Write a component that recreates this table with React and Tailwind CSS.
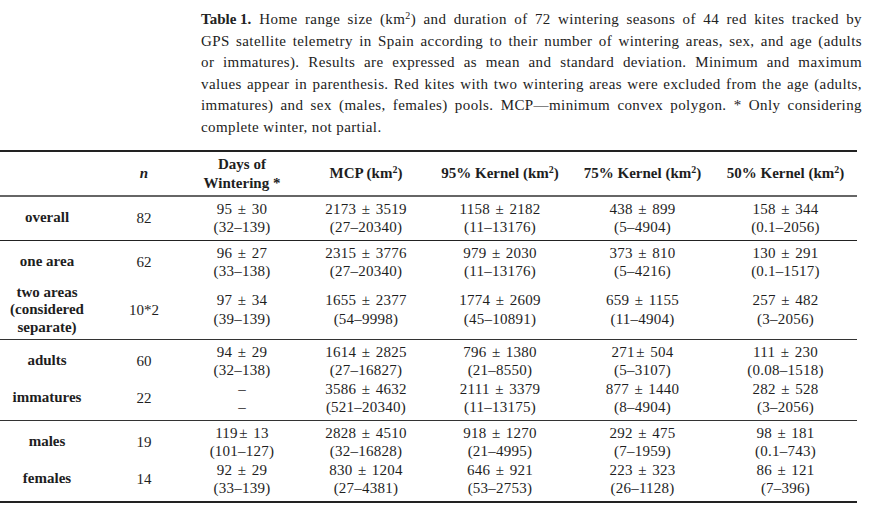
import React from "react";

const cols = "grid grid-cols-[94px_100px_96px_139px_142px_143px_143px]";

function Sup2() {
  return <sup className="text-[10px]">2</sup>;
}

function PM({ s }) {
  const parts = s.split("±");
  if (parts.length < 2) return <>{s}</>;
  return (
    <>
      {parts[0]}
      <span className="px-[1.5px]">±</span>
      {parts[1]}
    </>
  );
}

function Val({ a, b, mcp }) {
  return (
    <div className={`flex flex-col items-center justify-center leading-[18.5px] tracking-[0.25px] ${mcp ? "pl-[13px]" : ""}`}>
      <div className="whitespace-nowrap"><PM s={a} /></div>
      <div className="whitespace-nowrap">{b}</div>
    </div>
  );
}

function Row({ label, n, vals, h }) {
  return (
    <div className={`${cols} ${h} items-center`}>
      <div className="flex flex-col items-center font-bold leading-[17.5px]">
        {label.map((l, i) => (
          <div key={i} className="whitespace-nowrap">{l}</div>
        ))}
      </div>
      <div className="text-center">{n}</div>
      {vals.map((v, i) => (
        <Val key={i} a={v[0]} b={v[1]} mcp={i === 1} />
      ))}
    </div>
  );
}

const capLine = "text-justify [text-align-last:justify] whitespace-nowrap";

export default function App() {
  return (
    <div className="w-[873px] h-[508px] bg-white text-[#1e1e1e] font-['Liberation_Serif',serif] text-[15px] overflow-hidden">
      <div className="ml-[201px] w-[661px] pt-[9px] leading-[21.5px] text-[#222] tracking-[0.4px]">
        <div className="flex">
          <b className="tracking-normal mr-[8px] whitespace-nowrap">Table 1.</b>
          <div className={`${capLine} flex-1`}>
            Home range size (km<Sup2 />) and duration of 72 wintering seasons of 44 red kites tracked by
          </div>
        </div>
        <div className={capLine}>
          GPS satellite telemetry in Spain according to their number of wintering areas, sex, and age (adults
        </div>
        <div className={capLine}>
          or immatures). Results are expressed as mean and standard deviation. Minimum and maximum
        </div>
        <div className={capLine}>
          values appear in parenthesis. Red kites with two wintering areas were excluded from the age (adults,
        </div>
        <div className={capLine}>
          immatures) and sex (males, females) pools. MCP—minimum convex polygon. * Only considering
        </div>
        <div>complete winter, not partial.</div>
      </div>

      <div className="mt-[12px] w-[857px]">
        <div className="h-[2px] bg-[#222]" />
        <div className={`${cols} h-[43px] items-center font-bold leading-[19px]`}>
          <div />
          <div className="text-center italic">n</div>
          <div className="flex flex-col items-center">
            <div className="whitespace-nowrap">Days of</div>
            <div className="whitespace-nowrap">Wintering *</div>
          </div>
          <div className="text-center pl-[13px] whitespace-nowrap">MCP (km<Sup2 />)</div>
          <div className="text-center whitespace-nowrap">95% Kernel (km<Sup2 />)</div>
          <div className="text-center whitespace-nowrap">75% Kernel (km<Sup2 />)</div>
          <div className="text-center whitespace-nowrap">50% Kernel (km<Sup2 />)</div>
        </div>
        <div className="h-[1.5px] bg-[#666]" />
        <Row
          h="h-[43px]"
          label={["overall"]}
          n="82"
          vals={[
            ["95 ± 30", "(32–139)"],
            ["2173 ± 3519", "(27–20340)"],
            ["1158 ± 2182", "(11–13176)"],
            ["438 ± 899", "(5–4904)"],
            ["158 ± 344", "(0.1–2056)"],
          ]}
        />
        <div className="h-px bg-[#222]" />
        <div className="pb-[6px]">
          <Row
            h="h-[43px]"
            label={["one area"]}
            n="62"
            vals={[
              ["96 ± 27", "(33–138)"],
              ["2315 ± 3776", "(27–20340)"],
              ["979 ± 2030", "(11–13176)"],
              ["373 ± 810", "(5–4216)"],
              ["130 ± 291", "(0.1–1517)"],
            ]}
          />
          <Row
            h="h-[49px]"
            label={["two areas", "(considered", "separate)"]}
            n="10*2"
            vals={[
              ["97 ± 34", "(39–139)"],
              ["1655 ± 2377", "(54–9998)"],
              ["1774 ± 2609", "(45–10891)"],
              ["659 ± 1155", "(11–4904)"],
              ["257 ± 482", "(3–2056)"],
            ]}
          />
        </div>
        <div className="h-px bg-[#333]" />
        <div className="pt-[3px] pb-[3px]">
          <Row
            h="h-[37px]"
            label={["adults"]}
            n="60"
            vals={[
              ["94 ± 29", "(32–138)"],
              ["1614 ± 2825", "(27–16827)"],
              ["796 ± 1380", "(21–8550)"],
              ["271± 504", "(5–3107)"],
              ["111 ± 230", "(0.08–1518)"],
            ]}
          />
          <Row
            h="h-[37px]"
            label={["immatures"]}
            n="22"
            vals={[
              ["–", "–"],
              ["3586 ± 4632", "(521–20340)"],
              ["2111 ± 3379", "(11–13175)"],
              ["877 ± 1440", "(8–4904)"],
              ["282 ± 528", "(3–2056)"],
            ]}
          />
        </div>
        <div className="h-px bg-[#333]" />
        <div className="pt-[3px] pb-[3px]">
          <Row
            h="h-[37px]"
            label={["males"]}
            n="19"
            vals={[
              ["119± 13", "(101–127)"],
              ["2828 ± 4510", "(32–16828)"],
              ["918 ± 1270", "(21–4995)"],
              ["292 ± 475", "(7–1959)"],
              ["98 ± 181", "(0.1–743)"],
            ]}
          />
          <Row
            h="h-[37px]"
            label={["females"]}
            n="14"
            vals={[
              ["92 ± 29", "(33–139)"],
              ["830 ± 1204", "(27–4381)"],
              ["646 ± 921", "(53–2753)"],
              ["223 ± 323", "(26–1128)"],
              ["86 ± 121", "(7–396)"],
            ]}
          />
        </div>
        <div className="h-[2px] bg-[#222]" />
      </div>
    </div>
  );
}
